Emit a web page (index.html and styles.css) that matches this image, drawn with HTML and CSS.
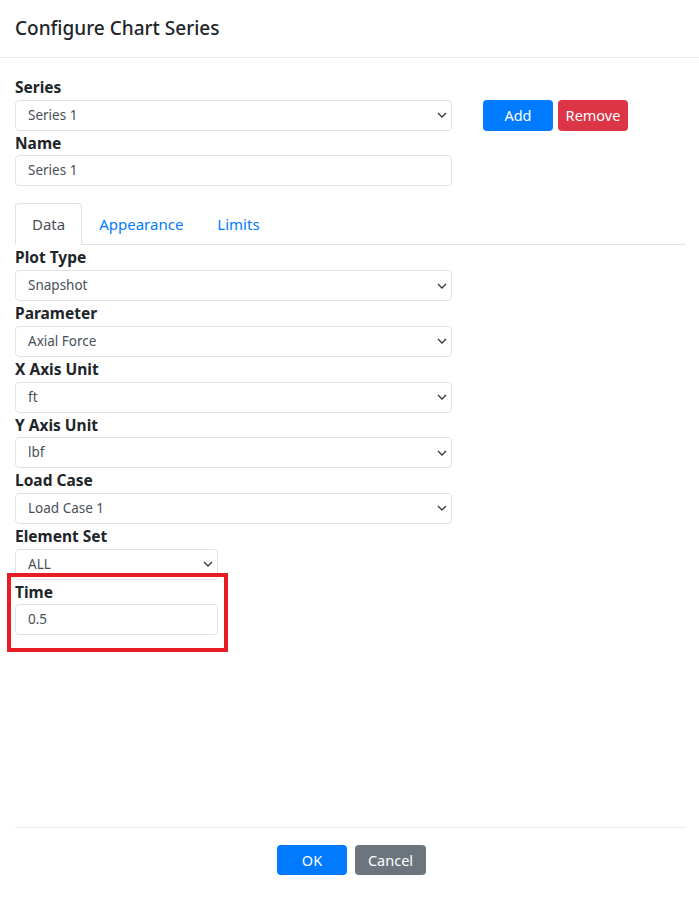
FILE: index.html
```html
<!DOCTYPE html>
<html lang="en">
  <head>
    <meta charset="UTF-8" />
    <meta name="viewport" content="width=device-width, initial-scale=1.0" />
    <link rel="stylesheet" href="styles.css">
    <title>Configure Chart Series</title>
  </head>
  <body>
    <div class="dialog">
      <div class="dialog-header">
        <h1>Configure Chart Series</h1>
      </div>

      <div class="dialog-body">
        <div class="series-row">
          <div class="field wide">
            <label>Series</label>
            <div class="select">Series 1</div>
          </div>
          <div class="series-buttons">
            <button class="btn btn-blue">Add</button>
            <button class="btn btn-red">Remove</button>
          </div>
        </div>
        <div class="field wide">
          <label>Name</label>
          <div class="input">Series 1</div>
        </div>

        <ul class="tabs">
          <li class="tab active">Data</li>
          <li class="tab">Appearance</li>
          <li class="tab">Limits</li>
        </ul>

        <div class="field wide">
          <label>Plot Type</label>
          <div class="select">Snapshot</div>
        </div>
        <div class="field wide">
          <label>Parameter</label>
          <div class="select">Axial Force</div>
        </div>
        <div class="field wide">
          <label>X Axis Unit</label>
          <div class="select">ft</div>
        </div>
        <div class="field wide">
          <label>Y Axis Unit</label>
          <div class="select">lbf</div>
        </div>
        <div class="field wide">
          <label>Load Case</label>
          <div class="select">Load Case 1</div>
        </div>
        <div class="field narrow">
          <label>Element Set</label>
          <div class="select">ALL</div>
        </div>
        <div class="field narrow highlighted">
          <label>Time</label>
          <div class="input">0.5</div>
        </div>
      </div>

      <div class="dialog-footer">
        <button class="btn btn-blue">OK</button>
        <button class="btn btn-grey">Cancel</button>
      </div>
    </div>
  </body>
</html>
```

FILE: styles.css
```css
body {
  margin: 0;
  font-family: "Noto Sans", "Open Sans", sans-serif;
  color: #212529;
  background: #fff;
}

.dialog {
  width: 699px;
  height: 900px;
  display: flex;
  flex-direction: column;
}

.dialog-header {
  padding: 13px 15px 14px;
  border-bottom: 1px solid #e9ecef;
}
.dialog-header h1 {
  margin: 0;
  font-size: 19px;
  font-weight: 500;
  line-height: 30px;
}

.dialog-body {
  flex: 1;
  padding: 17px 13px 0 15px;
}

.series-row {
  display: flex;
  align-items: flex-end;
  gap: 31px;
}
.series-buttons {
  display: flex;
  gap: 5px;
}

.field label {
  display: block;
  font-size: 15.5px;
  font-weight: 700;
  line-height: 24.7px;
}
.field.wide {
  width: 437px;
}
.field.narrow {
  width: 203px;
}
.highlighted {
  position: relative;
}
.highlighted::after {
  content: "";
  position: absolute;
  left: -8px;
  top: -7px;
  width: 213px;
  height: 71px;
  border: 4px solid #e81c24;
  pointer-events: none;
}

.select,
.input {
  box-sizing: border-box;
  height: 31px;
  padding: 0 12px;
  border: 1px solid #dfe3e8;
  border-radius: 4px;
  font-size: 13.5px;
  line-height: 29px;
  color: #495057;
}
.select {
  background: url("data:image/svg+xml,%3Csvg xmlns='http://www.w3.org/2000/svg' width='10' height='6' viewBox='0 0 10 6'%3E%3Cpath d='M1 1l4 4 4-4' fill='none' stroke='%23343a40' stroke-width='1.3'/%3E%3C/svg%3E") no-repeat right 4px center;
}

.tabs {
  display: flex;
  margin: 17px 0 0;
  padding: 0;
  list-style: none;
  border-bottom: 1px solid #dee2e6;
}
.tab {
  padding: 8px 16px;
  margin-bottom: -1px;
  border: 1px solid transparent;
  border-radius: 4px 4px 0 0;
  font-size: 15px;
  line-height: 24px;
  color: #007bff;
}
.tab.active {
  color: #495057;
  border-color: #dee2e6 #dee2e6 #fff;
}

.btn {
  width: 70px;
  height: 31px;
  border: 1px solid transparent;
  border-radius: 4px;
  font-family: inherit;
  font-size: 14.5px;
  color: #fff;
}
.btn-blue {
  background: #007bff;
}
.btn-red {
  background: #dc3545;
}
.btn-grey {
  background: #6c757d;
  width: 71px;
}

.dialog-footer {
  margin: 0 13px 0 15px;
  padding: 17px 0 25px 2px;
  border-top: 1px solid #e9ecef;
  display: flex;
  justify-content: center;
  gap: 8px;
}
.dialog-footer .btn {
  height: 30px;
}
```
